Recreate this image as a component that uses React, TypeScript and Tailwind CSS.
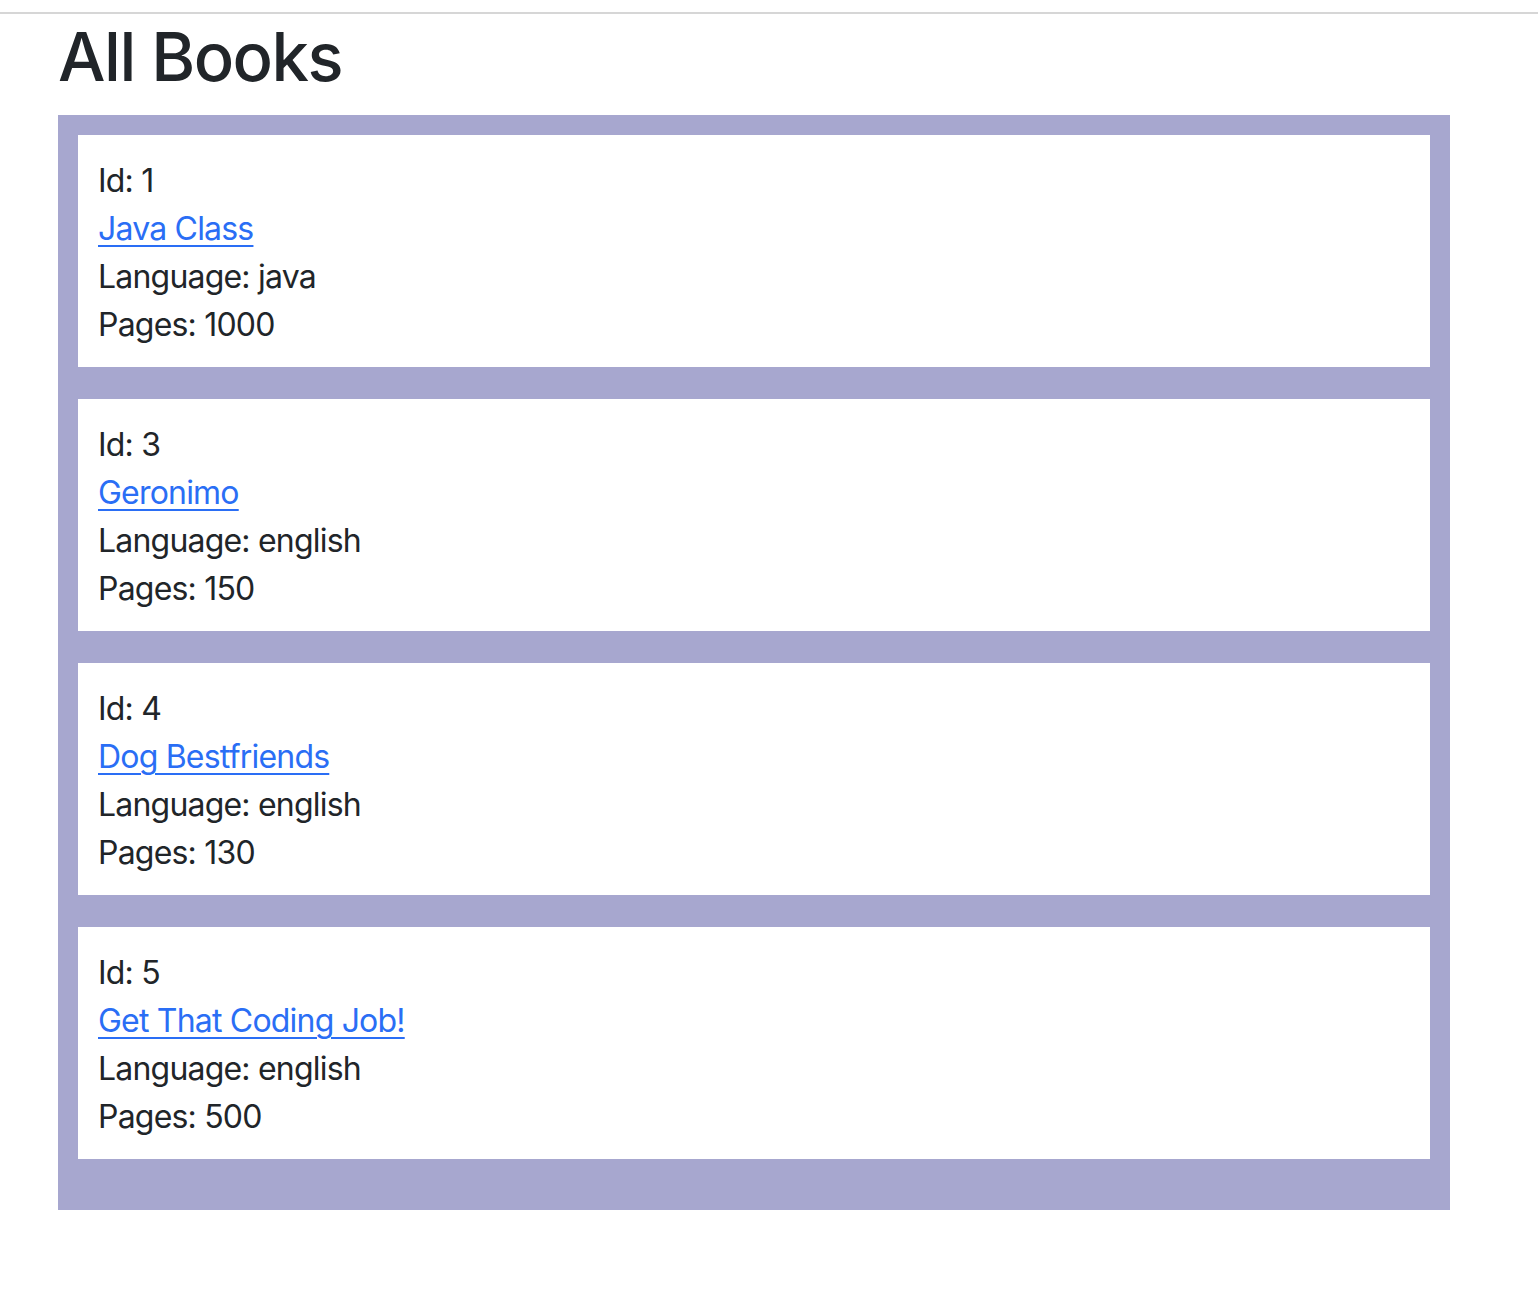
const books = [
  { id: 1, title: 'Java Class', language: 'java', pages: 1000 },
  { id: 3, title: 'Geronimo', language: 'english', pages: 150 },
  { id: 4, title: 'Dog Bestfriends', language: 'english', pages: 130 },
  { id: 5, title: 'Get That Coding Job!', language: 'english', pages: 500 },
];

export default function App() {
  return (
    <div className="min-h-screen bg-white font-['Inter',sans-serif] text-[#212529]">
      <div className="h-3" />
      <div className="h-[2px] w-full bg-[#d6d6d6]" />
      <div className="pl-[58px] pr-[88px]">
        <h1 className="pt-[3px] font-['Inter',sans-serif] text-[67px] font-medium leading-[80px] tracking-[-1.5px]">
          All Books
        </h1>
        <div className="mt-[18px] bg-[#a7a7cf] px-5 pt-5 pb-[51px]">
          <div className="flex flex-col gap-8">
            {books.map((book) => (
              <div key={book.id} className="bg-white px-5 pt-[22px] pb-[18px] text-[32px] leading-[48px] tracking-[-0.8px]">
                <p>Id: {book.id}</p>
                <p>
                  <a href="#" className="text-[#2a6ef5] underline decoration-2 underline-offset-[5px]">
                    {book.title}
                  </a>
                </p>
                <p>Language: {book.language}</p>
                <p>Pages: {book.pages}</p>
              </div>
            ))}
          </div>
        </div>
      </div>
    </div>
  );
}
